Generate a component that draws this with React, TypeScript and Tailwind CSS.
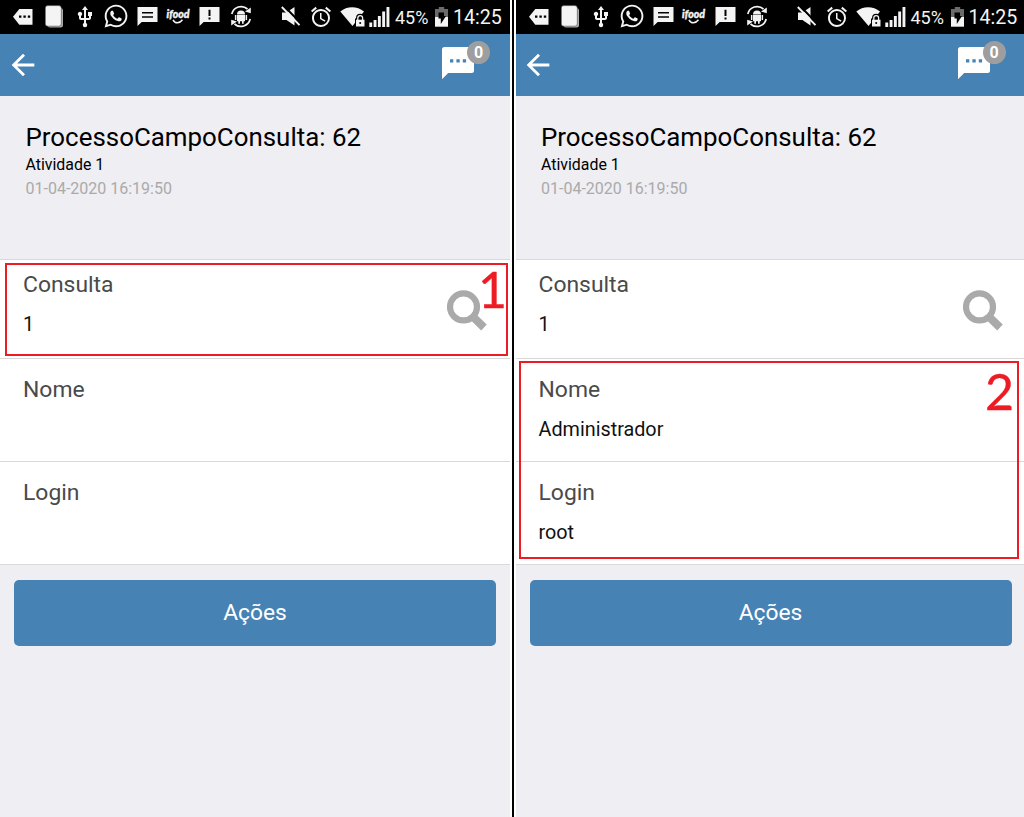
import type { ReactNode } from 'react'
import { FaWhatsapp } from 'react-icons/fa'
import { MdAlarm, MdArrowBack, MdUsb } from 'react-icons/md'

interface Field {
  label: string
  value: string
  search?: boolean
}

interface PhoneProps {
  fields: Field[]
  className: string
  children?: ReactNode
}

function StatusBar() {
  return (
    <div className="flex h-[34px] shrink-0 items-start overflow-hidden whitespace-nowrap bg-black pt-1 text-[#f4f4f4]">
      {/* ── Notifications ── */}
      <svg className="ml-[13px] h-6 w-5 shrink-0" viewBox="13 4 20 24">
        <path d="M13 16.7 19.3 9h13.2v15.7H19.3z" fill="currentColor" />
        <path d="M19 15.4h2.4v2.4H19zM23.4 15.4h2.4v2.4h-2.4zM27.8 15.4h2.4v2.4h-2.4z" fill="#000" />
      </svg>
      <svg className="ml-3 h-6 w-[19px] shrink-0" viewBox="45 4 19 24">
        <rect x="47.5" y="8" width="15.5" height="19.5" rx="2.5" fill="#aaa" />
        <rect x="45.3" y="5.6" width="16" height="20.6" rx="2.5" fill="currentColor" stroke="#333" strokeWidth="0.5" />
      </svg>
      <MdUsb size={24} className="mt-px ml-[9px] shrink-0" />
      <FaWhatsapp size={26} className="ml-[6px] -mt-px w-[26px] shrink-0" />
      <svg className="ml-2 h-6 w-[21px] shrink-0" viewBox="137 4 21 24">
        <path d="M137.5 7h20v15h-15.8l-4.2 4z" fill="currentColor" />
        <path d="M142 12.8h11M142 17h11" stroke="#000" strokeWidth="1.4" />
      </svg>
      <div className="ml-[9px] flex w-[22px] shrink-0 flex-col items-center pt-1">
        <span className="h-3 font-['Lato',sans-serif] text-[10.5px] leading-3 font-black italic [-webkit-text-stroke:0.4px_#f4f4f4]">
          ifood
        </span>
        <svg className="-mt-px h-[5px] w-3" viewBox="0 0 12 5">
          <path d="M1 .8c2 4 6.5 4 9.5 0" fill="none" stroke="currentColor" strokeWidth="1.5" />
        </svg>
      </div>
      <svg className="ml-[10px] h-6 w-[21px] shrink-0" viewBox="199 4 21 24">
        <path d="M199.5 7h20v15h-15.8l-4.2 4z" fill="currentColor" />
        <path d="M208.5 9.8h2v6.2h-2zM208.5 17.4h2v2h-2z" fill="#000" />
      </svg>
      <svg className="ml-[10px] h-6 w-[22px] shrink-0" viewBox="230 4 22 24">
        <g fill="none" stroke="currentColor" strokeWidth="1.7">
          <path d="M231.8 14A9.6 9.6 0 0 1 247.5 9M250.2 19A9.6 9.6 0 0 1 234.5 24" />
        </g>
        <path d="M250.8 7.5v5.7l-5.8-1.7zM231.2 25.5v-5.7l5.8 1.7z" fill="currentColor" />
        <path
          d="M237 14.2a4 3.8 0 0 1 8 0zM237 14.8h8v6.4h-8zM234.9 15h1.5v5h-1.5zM245.6 15h1.5v5h-1.5zM238.3 21h1.7v2.8h-1.7zM242 21h1.7v2.8H242z"
          fill="currentColor"
        />
      </svg>

      {/* ── System ── */}
      <svg className="ml-[29px] h-6 w-5 shrink-0" viewBox="281 4 20 24">
        <path d="M282 12.5h4.5l8-5.5v18.5l-8-5.5H282z" fill="currentColor" />
        <path d="M283.3 5.3 301 23.5" stroke="#000" strokeWidth="2" />
        <path d="M281.8 7 299.5 25.2" stroke="currentColor" strokeWidth="1.9" />
      </svg>
      <MdAlarm size={24} className="mt-px ml-2 shrink-0" />
      <svg className="ml-[7px] h-6 w-[26px] shrink-0" viewBox="340 4 26 24">
        <path d="M340.3 11.5c6.5-5.8 17-5.8 23.7 0L352.5 26z" fill="currentColor" />
        <path d="M355 18.5h10.5v8.5H355z" fill="#000" />
        <path d="M357.8 20v-2a2.4 2.4 0 0 1 4.8 0v2" fill="none" stroke="#000" strokeWidth="3.5" />
        <path d="M357.8 20v-2a2.4 2.4 0 0 1 4.8 0v2" fill="none" stroke="currentColor" strokeWidth="1.3" />
        <path d="M356 19.7h8.5v6.8H356z" fill="currentColor" />
        <circle cx="360.2" cy="23" r="1" fill="#000" />
      </svg>
      <svg className="ml-[3px] h-6 w-[21px] shrink-0" viewBox="369 4 21 24">
        <path
          d="M369.3 22.5h2.9V27h-2.9zM373.6 20h2.9v7h-2.9zM377.9 16h2.9v11h-2.9zM382.2 11.5h2.9V27h-2.9zM386.5 7h2.9v20h-2.9z"
          fill="currentColor"
        />
      </svg>
      <span className="ml-[5px] w-10 shrink-0 text-[18px] leading-[27px]">45%</span>
      <svg className="h-6 w-[14px] shrink-0" viewBox="435 4 14 24">
        <path d="M435 9h3.8V7h5.4v2h3.8v9h-13z" fill="#6b6b6b" />
        <path d="M435 17h13v9.7h-13z" fill="currentColor" />
        <path d="M438.5 12.5h5.5V16h2l-5.2 8v-5.5h-2.3z" fill="#000" />
      </svg>
      <span className="ml-1 text-[19.6px] leading-7">14:25</span>
    </div>
  )
}

function AppBar() {
  return (
    <div className="flex h-[62px] shrink-0 items-center justify-between bg-[#4682b4] pr-5 pl-[5.5px] text-white">
      <MdArrowBack size={34} />
      <div className="relative -mt-1 mr-4">
        <svg className="h-[33px] w-8" viewBox="0 0 32 33">
          <path
            d="M2.5 0h27A2.5 2.5 0 0 1 32 2.5v21a2.5 2.5 0 0 1-2.5 2.5H6.2L0 32.3V2.5A2.5 2.5 0 0 1 2.5 0z"
            fill="#fff"
          />
          <path d="M8 12.2h3.3v3.3H8zM14.4 12.2h3.3v3.3h-3.3zM20.8 12.2h3.3v3.3h-3.3z" fill="#4682b4" />
        </svg>
        <span className="absolute -top-[6px] left-[25px] flex size-[23px] items-center justify-center rounded-full bg-[#9e9e9e] pt-px text-[16px] leading-none font-bold">
          0
        </span>
      </div>
    </div>
  )
}

function SearchIcon() {
  return (
    <svg className="h-[41px] w-[41px]" viewBox="0 0 41 41" fill="none" stroke="#aaa">
      <circle cx="16.5" cy="16.9" r="13.5" strokeWidth="6.2" />
      <path d="M24.8 25.7 37 37.5" strokeWidth="8" />
    </svg>
  )
}

function FieldRow({ label, value, search }: Field) {
  return (
    <div
      className={
        search
          ? 'flex h-[99px] items-start justify-between border-b border-[#d9d9d9] bg-white pt-[11px] pr-[22px] pl-[23px]'
          : 'flex h-[103px] items-start border-b border-[#d9d9d9] bg-white pt-[17px] pl-[23px]'
      }
    >
      <div>
        <div className="text-[22.9px] leading-7 text-[#4a4a4a]">{label}</div>
        <div className="mt-[13px] text-[19.8px] leading-[26px] text-[#111]">{value}</div>
      </div>
      {search && (
        <div className="pt-[19px]">
          <SearchIcon />
        </div>
      )}
    </div>
  )
}

function Phone({ fields, className, children }: PhoneProps) {
  return (
    <div className={className}>
      {/* both screens are 510 wide, the right one runs past the edge */}
      <div className="relative flex w-[510px] shrink-0 flex-col">
        <StatusBar />
        <AppBar />
        <div className="h-[163px] shrink-0 pt-[25px] pl-[25.5px]">
          <h1 className="text-[25.9px] leading-8">ProcessoCampoConsulta: 62</h1>
          <p className="text-[15.9px] leading-[23px]">Atividade 1</p>
          <p className="text-[16px] leading-[25px] text-[#aaa]">01-04-2020 16:19:50</p>
        </div>
        <div className="border-t border-[#d9d9d9]">
          {fields.map((f) => (
            <FieldRow key={f.label} {...f} />
          ))}
        </div>
        <button className="mt-[15px] ml-[14px] h-[66px] w-[482px] shrink-0 rounded-[5px] bg-[#4682b4] pt-px text-[22.8px] text-white">
          Ações
        </button>
        {children}
      </div>
    </div>
  )
}

export default function App() {
  return (
    <div className="flex h-[817px] w-[1024px] overflow-hidden bg-white font-['Roboto',sans-serif] text-black">
      <Phone
        className="flex w-[510px] shrink-0 bg-[#efeef3]"
        fields={[
          { label: 'Consulta', value: '1', search: true },
          { label: 'Nome', value: '' },
          { label: 'Login', value: '' },
        ]}
      >
        <div className="absolute top-[263px] left-[5px] h-[93px] w-[503px] border-2 border-[#ed1c24]">
          <span className="absolute -top-[3px] -right-px font-['Lato',sans-serif] text-[50px] leading-[54px] text-[#ed1c24] [-webkit-text-stroke:0.4px_#ed1c24]">
            1
          </span>
        </div>
      </Phone>

      <div className="ml-[2px] w-[2px] shrink-0 bg-black" />

      <Phone
        className="ml-[1.5px] flex w-[508.5px] shrink-0 overflow-hidden bg-[#efeef3]"
        fields={[
          { label: 'Consulta', value: '1', search: true },
          { label: 'Nome', value: 'Administrador' },
          { label: 'Login', value: 'root' },
        ]}
      >
        <div className="absolute top-[361px] left-[3.5px] h-[198px] w-[500px] border-2 border-[#ed1c24]">
          <span className="absolute top-px right-[3px] font-['Lato',sans-serif] text-[50px] leading-[54px] text-[#ed1c24] [-webkit-text-stroke:0.4px_#ed1c24]">
            2
          </span>
        </div>
      </Phone>
    </div>
  )
}
